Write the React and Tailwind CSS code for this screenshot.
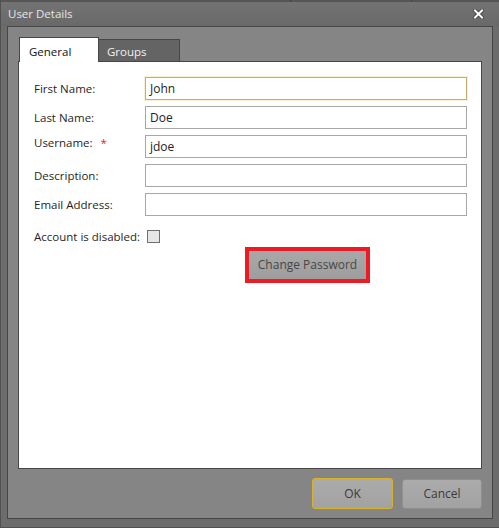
const FONT = { fontFamily: '"Open Sans", "Noto Sans", sans-serif' }

function Field({ label, value, required, focused, alignTop }) {
  return (
    <div className={`flex ${alignTop ? 'items-start' : 'items-center'} h-[23px]`}>
      <div className={`w-[111px] shrink-0 flex gap-[8px] text-[#1f1f1f] ${alignTop ? '-mt-[1px]' : ''}`}>
        <span>{label}</span>
        {required && <span className="text-[#e0242c]">*</span>}
      </div>
      <div
        className={`flex-1 h-[23px] bg-white border px-[4px] flex items-center text-[#222] text-[12px] ${
          focused ? 'border-[#c7ad70] shadow-[0_0_0_1px_#fbf0cf]' : 'border-[#a7a7a7]'
        }`}
      >
        {value}
      </div>
    </div>
  )
}

export default function App() {
  return (
    <div style={FONT} className="w-[499px] h-[528px] bg-[#6c6c6c] border-l border-b border-[#505050] flex flex-col text-[11.5px] overflow-hidden">
      {/* strip of what is behind */}
      <div className="h-[2px] flex bg-[#555]">
        <div className="w-[290px] border-r border-[#444]" />
        <div className="w-[121px] border-r border-[#444]" />
      </div>

      {/* title bar */}
      <div className="h-[24px] flex items-center justify-between pl-[7px] pr-[15px] bg-gradient-to-b from-[#737373] to-[#696969]">
        <span className="text-[#e6e6e6]">User Details</span>
        <svg width="11" height="10" viewBox="0 0 11 10">
          <path d="M2 1.5 L9 8.5 M9 1.5 L2 8.5" stroke="#3a3a3a" strokeWidth="3.6" strokeLinecap="square" />
          <path d="M2 1.5 L9 8.5 M9 1.5 L2 8.5" stroke="#ffffff" strokeWidth="2" strokeLinecap="square" />
        </svg>
      </div>

      {/* body */}
      <div className="flex-1 px-[6px] pb-[8px] flex">
        <div className="flex-1 border border-[#474747] bg-[#858585] px-[10px] pt-[10px] pb-[9px] flex flex-col">
          {/* tabs */}
          <div className="flex items-end h-[24px] pl-[1px]">
            <div className="w-[80px] h-[25px] bg-white border border-b-0 border-[#474747] pl-[9px] pt-[5px] text-[#111] relative z-10 -mb-[1px]">
              General
            </div>
            <div className="w-[81px] h-[22px] bg-[#646464] border border-l-0 border-b-0 border-[#474747] pl-[8px] pt-[3px] text-[#f2f2f2]">
              Groups
            </div>
          </div>

          {/* content */}
          <div className="h-[408px] bg-white border border-[#474747] pl-[15px] pr-[14px] pt-[15px] flex flex-col">
            <div className="flex flex-col gap-[6px]">
              <Field label="First Name:" value="John" focused />
              <Field label="Last Name:" value="Doe" />
              <Field label="Username:" value="jdoe" required alignTop />
              <div className="h-[1px]" />
            </div>
            <div className="flex flex-col gap-[6px] -mt-[1px]">
              <Field label="Description:" value="" />
              <Field label="Email Address:" value="" />
            </div>
            <div className="flex items-center h-[13px] mt-[14px]">
              <span className="w-[113px] shrink-0 text-[#1f1f1f] whitespace-nowrap">Account is disabled:</span>
              <div className="w-[13px] h-[13px] border border-[#707070] bg-[#e6e6e6]" />
            </div>
            <div className="mt-[4px] ml-[211px] w-[125px] h-[36px] border-[4px] border-[#ed1c24] flex">
              <div className="flex-1 bg-gradient-to-b from-[#a8a8a8] to-[#9e9e9e] flex items-center justify-center text-[#474747] text-[12px]">
                Change Password
              </div>
            </div>
          </div>

          {/* footer */}
          <div className="flex-1 flex items-end justify-end gap-[9px]">
            <button className="w-[81px] h-[31px] rounded-[3px] border border-[#d8b22a] bg-gradient-to-b from-[#ababab] to-[#a2a2a2] text-[#3a3a3a] text-[12px]">
              OK
            </button>
            <button className="w-[80px] h-[30px] rounded-[3px] border border-[#8f8f8f] bg-gradient-to-b from-[#ababab] to-[#a2a2a2] text-[#3a3a3a] text-[12px]">
              Cancel
            </button>
          </div>
        </div>
      </div>
    </div>
  )
}
